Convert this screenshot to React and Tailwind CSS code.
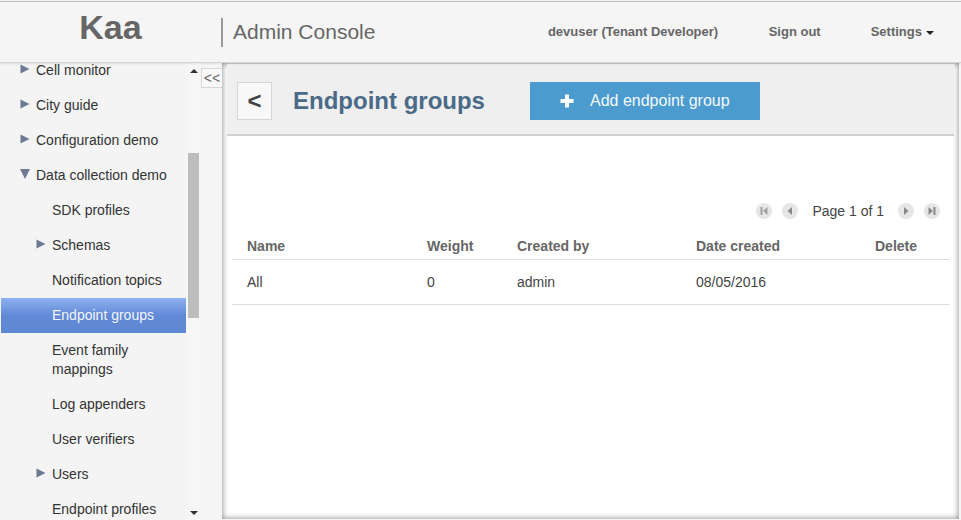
import React from "react";

const navItems = [
  { label: "Cell monitor", level: 0, arrow: "right" },
  { label: "City guide", level: 0, arrow: "right" },
  { label: "Configuration demo", level: 0, arrow: "right" },
  { label: "Data collection demo", level: 0, arrow: "down" },
  { label: "SDK profiles", level: 1 },
  { label: "Schemas", level: 1, arrow: "right" },
  { label: "Notification topics", level: 1 },
  { label: "Endpoint groups", level: 1, active: true },
  { label: "Event family mappings", level: 1 },
  { label: "Log appenders", level: 1 },
  { label: "User verifiers", level: 1 },
  { label: "Users", level: 1, arrow: "right" },
  { label: "Endpoint profiles", level: 1 },
];

const NavArrow = ({ dir }) => (
  <svg width="10" height="10" viewBox="0 0 10 10" className="absolute left-[-16px] top-[3px]">
    {dir === "right" ? <path d="M0.5 0.5 L9.5 5 L0.5 9.5 Z" fill="#6d7b92" /> : <path d="M0 0 L10 0 L5 10 Z" fill="#6d7b92" />}
  </svg>
);

const NavRow = ({ item }) => (
  <div
    className={`py-[8px] pr-2 text-[14px] leading-[19px] ${item.level === 0 ? "pl-[35px]" : "pl-[51px]"} ${
      item.active ? "bg-gradient-to-b from-[#8db2f0] via-[#6189d6] to-[#5f88d2] text-[#f2f5fb]" : "text-[#333333]"
    }`}
  >
    <span className="relative block">
      {item.arrow && <NavArrow dir={item.arrow} />}
      {item.label}
    </span>
  </div>
);

const PagerButton = ({ children }) => (
  <span className="flex h-[16px] w-[16px] items-center justify-center rounded-full bg-[#e6e6e6]">
    <svg width="8" height="10" viewBox="0 0 8 10">{children}</svg>
  </span>
);

const App = () => {
  const cols = [
    ["Name", "w-[180px]", "All"],
    ["Weight", "w-[90px]", "0"],
    ["Created by", "w-[179px]", "admin"],
    ["Date created", "w-[179px]", "08/05/2016"],
    ["Delete", "flex-1", ""],
  ];

  return (
    <div className="flex h-[520px] w-[961px] flex-col overflow-hidden bg-[#f5f5f5] font-['Liberation_Sans',Arial,sans-serif]">
      {/* Header */}
      <header className="z-10 mt-px flex h-[62px] shrink-0 items-center border-y border-t-[#bdbdbd] border-b-[#d4d4d4] bg-[#f5f5f5] shadow-[0_1px_2px_rgba(0,0,0,0.08)]">
        <div className="flex w-[221px] justify-center pb-[9px] text-[34px] font-bold leading-[39px] text-[#666666]">Kaa</div>
        <div className="flex h-[29px] items-center border-l-2 border-[#999999] pl-[10px] text-[21px] text-[#666666]">Admin Console</div>
        <div className="ml-[172.5px] text-[13px] font-bold text-[#666666]">devuser (Tenant Developer)</div>
        <div className="ml-[50.5px] text-[13px] font-bold text-[#666666]">Sign out</div>
        <div className="ml-[50px] flex items-center gap-[4px] text-[13px] font-bold text-[#666666]">
          Settings
          <span className="mt-[2px] h-0 w-0 border-x-[4px] border-t-[4px] border-x-transparent border-t-[#222222]" />
        </div>
      </header>

      <div className="flex min-h-0 flex-1">
        {/* Sidebar */}
        <aside className="flex w-[201px] shrink-0 overflow-hidden">
          <nav className="mt-[-10px] ml-px w-[185px] shrink-0 bg-[#f4f4f4]">
            {navItems.map((item) => (
              <NavRow key={item.label} item={item} />
            ))}
          </nav>
          <div className="flex w-[15px] flex-col items-center bg-[#f6f6f6]">
            <span className="mt-[6px] h-0 w-0 border-x-[4px] border-b-[4px] border-x-transparent border-b-[#333333]" />
            <div className="mt-[80px] h-[165px] w-[11px] bg-[#bdbdbd]" />
            <span className="mt-auto mb-[5px] h-0 w-0 border-x-[4px] border-t-[4px] border-x-transparent border-t-[#333333]" />
          </div>
        </aside>

        <div className="w-[21px] shrink-0 pt-[5px]">
          <div className="flex h-[20px] w-[21px] items-center justify-center border border-r-0 border-[#d6d6d6] bg-[#f8f8f8] text-[14px] text-[#666666]">&lt;&lt;</div>
        </div>

        {/* Main panel */}
        <main className="mr-[2px] mb-px flex min-w-0 flex-1 flex-col bg-white px-[5px] shadow-[inset_0_0_6px_rgba(0,0,0,0.5)]">
          <div className="mt-px flex h-[72px] shrink-0 items-center border-b-2 border-[#d0d0d0] bg-[#efefef] pl-[10px] pt-[4px]">
            <div className="flex h-[38px] w-[35px] items-center justify-center border border-[#d6d6d6] bg-[#f8f8f8] text-[24px] font-bold text-[#444444]">&lt;</div>
            <h1 className="ml-[21px] text-[24px] font-bold text-[#4a6a87]">Endpoint groups</h1>
            <button className="ml-[45px] flex h-[38px] w-[230px] items-center bg-[#4b9bce] pl-[30px] text-[16px] text-[#f4f9fc]">
              <svg width="14" height="14" viewBox="0 0 14 14" className="mr-[16px]">
                <path d="M5 0.5 H9 V5 H13.5 V9 H9 V13.5 H5 V9 H0.5 V5 H5 Z" fill="#ffffff" />
              </svg>
              Add endpoint group
            </button>
          </div>

          <div className="mt-[63px] flex h-[24px] items-center justify-end pr-[14px] text-[14px] text-[#444444]">
            <div className="flex items-center gap-[10px]">
              <PagerButton><path d="M0.5 1 H2.5 V9 H0.5 Z M7.5 1 V9 L3 5 Z" fill="#a0a0a0" /></PagerButton>
              <PagerButton><path d="M6 1 V9 L1.5 5 Z" fill="#888888" /></PagerButton>
            </div>
            <span className="mx-[14px]">Page 1 of 1</span>
            <div className="flex items-center gap-[10px]">
              <PagerButton><path d="M2 1 V9 L6.5 5 Z" fill="#888888" /></PagerButton>
              <PagerButton><path d="M0.5 1 V9 L5 5 Z M5.5 1 H7.5 V9 H5.5 Z" fill="#888888" /></PagerButton>
            </div>
          </div>

          <div className="mx-[5px] mt-[10px]">
            <div className="flex h-[27px] items-center border-b border-[#dddddd] pl-[15px] text-[14px] font-bold text-[#666666]">
              {cols.map(([title, w]) => (
                <div key={title} className={w}>{title}</div>
              ))}
            </div>
            <div className="flex h-[45px] items-center border-b border-[#dddddd] pl-[15px] text-[14px] text-[#444444]">
              {cols.map(([title, w, value]) => (
                <div key={title} className={w}>{value}</div>
              ))}
            </div>
          </div>
        </main>
      </div>
    </div>
  );
};

export default App;
